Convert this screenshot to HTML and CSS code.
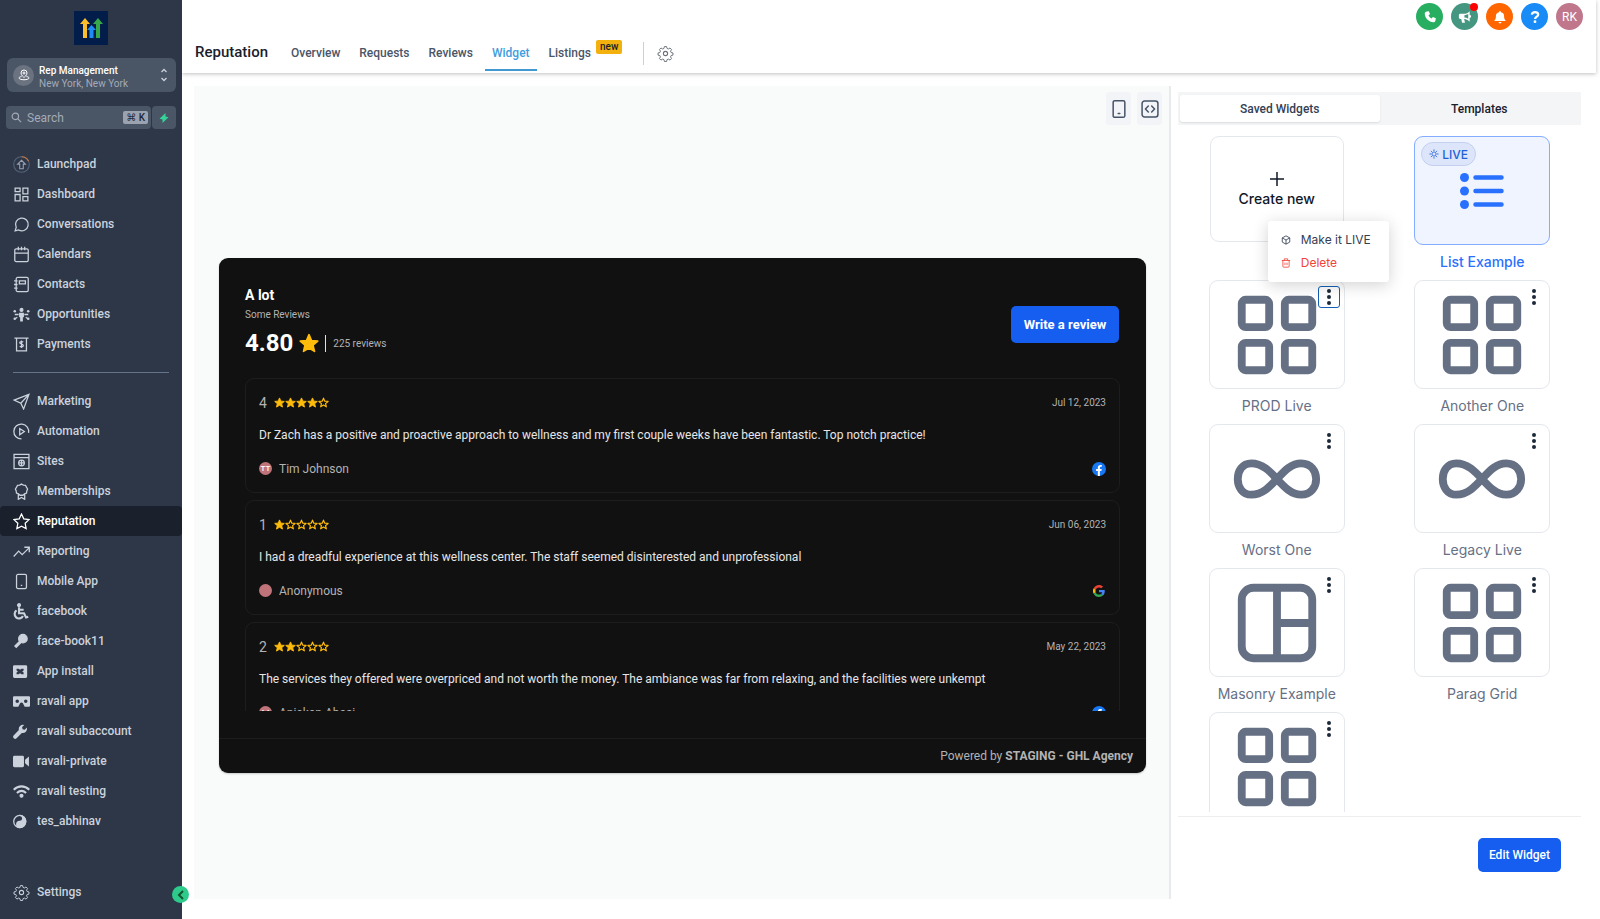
FILE: index.html
```html
<!DOCTYPE html>
<html lang="en">
<head>
    <meta charset="UTF-8">
    <meta name="viewport" content="width=device-width, initial-scale=1.0">
    <title>Reputation - Widget</title>
    <link rel="stylesheet" href="styles.css">
</head>
<body>

    <!-- Shared icons -->
    <svg class="sprite" aria-hidden="true">
        <symbol id="star-full" viewBox="0 0 24 24"><path fill="currentColor" stroke="currentColor" stroke-width="2" stroke-linejoin="round" d="M12 2l3 7 7.500.6-5.700 5 1.800 7.400L12 18l-6.600 4 1.800-7.400-5.700-5L9 9z"/></symbol>
        <symbol id="star-empty" viewBox="0 0 24 24"><path fill="none" stroke="currentColor" stroke-width="2.600" stroke-linejoin="round" d="M12 2.500l2.800 6.600 7.200.6-5.500 4.700 1.700 7L12 17.700l-6.200 3.700 1.700-7L2 9.700l7.200-.6z"/></symbol>
        <symbol id="grid" viewBox="0 0 24 24"><g fill="none" stroke="currentColor" stroke-width="2"><rect x="3" y="3" width="7" height="7" rx="1"/><rect x="14" y="3" width="7" height="7" rx="1"/><rect x="3" y="14" width="7" height="7" rx="1"/><rect x="14" y="14" width="7" height="7" rx="1"/></g></symbol>
        <symbol id="infinity" viewBox="0 0 24 24"><path fill="none" stroke="currentColor" stroke-width="2" d="M18.180 8C23.270 8 23.270 16 18.180 16 13.080 16 11.040 8 5.430 8 .83 8 .83 16 5.430 16 11.040 16 13.080 8 18.180 8z"/></symbol>
        <symbol id="masonry" viewBox="0 0 24 24"><g fill="none" stroke="currentColor" stroke-width="2"><rect x="3" y="3" width="18" height="18" rx="3"/><path d="M12 3v18M12 12h9"/></g></symbol>
        <symbol id="dots" viewBox="0 0 6 18"><g fill="currentColor"><circle cx="3" cy="3" r="2"/><circle cx="3" cy="9" r="2"/><circle cx="3" cy="15" r="2"/></g></symbol>
        <symbol id="gear" viewBox="0 0 24 24"><g fill="none" stroke="currentColor" stroke-linejoin="round"><circle cx="12" cy="12" r="3"/><path d="M10.300 1.800h3.400l.7 2.900 2.100.9 2.600-1.600 2.400 2.400-1.600 2.600.9 2.100 2.900.7v3.400l-2.900.7-.9 2.100 1.600 2.600-2.400 2.400-2.600-1.600-2.100.9-.7 2.900h-3.400l-.7-2.900-2.100-.9-2.600 1.600-2.400-2.400 1.600-2.600-.9-2.100-2.900-.7v-3.400l2.900-.7.9-2.100-1.600-2.600L4.900 4l2.600 1.600 2.100-.9z" transform="translate(1.200 .6) scale(.9 .9)"/></g></symbol>
        <symbol id="phone-outline" viewBox="0 0 24 24"><rect x="5" y="2" width="14" height="20" rx="2"/><path d="M11 17.500h2"/></symbol>
        <symbol id="facebook" viewBox="0 0 24 24"><circle cx="12" cy="12" r="12" fill="#1877f2"/><path fill="#fff" d="M10 24v-8.500H7V12h3V9.500C10 6.400 11.800 5 14.500 5c1.200 0 2.300.2 2.300.2v3h-1.400c-1.400 0-1.900.8-1.900 1.700V12h3.200l-.6 3.500h-2.600V24z"/></symbol>
        <symbol id="google" viewBox="0 0 48 48"><path fill="#ea4335" d="M24 9.500c3.540 0 6.710 1.220 9.210 3.600l6.850-6.850C35.900 2.380 30.470 0 24 0 14.620 0 6.510 5.380 2.560 13.220l7.980 6.190C12.430 13.720 17.740 9.500 24 9.500z"/><path fill="#4285f4" d="M46.980 24.550c0-1.570-.15-3.090-.38-4.550H24v9.020h12.940c-.58 2.960-2.260 5.480-4.780 7.180l7.730 6c4.510-4.180 7.090-10.360 7.090-17.650z"/><path fill="#fbbc05" d="M10.530 28.590a14.500 14.500 0 0 1 0-9.180l-7.980-6.190a24 24 0 0 0 0 21.560z"/><path fill="#34a853" d="M24 48c6.480 0 11.930-2.130 15.890-5.810l-7.730-6c-2.150 1.450-4.920 2.300-8.160 2.300-6.260 0-11.570-4.220-13.470-9.910l-7.980 6.190C6.510 42.620 14.620 48 24 48z"/></symbol>
    </svg>

    <div class="app">
        <aside class="sidebar">
            <svg class="logo" viewBox="0 0 34 34">
                <rect width="34" height="34" fill="#031d4a"/>
                <path fill="#fcbf2c" d="M11 7l5 6h-3v14H9V13H6z"/>
                <path fill="#37a84a" d="M24 7l5 6h-3v14h-4V13h-3z"/>
                <path fill="#1f8cf5" d="M17.500 14l4.500 5h-2.500v8h-4v-8H13z"/>
            </svg>

            <button class="account">
                <span class="account-pin">
                    <svg viewBox="0 0 24 24"><path d="M12 17s-6-4.500-6-9a6 6 0 0 1 12 0c0 4.500-6 9-6 9z"/><circle cx="12" cy="8" r="2"/><path d="M7 15c-3 .6-5 1.600-5 3 0 2 4.500 3.500 10 3.500S22 20 22 18c0-1.400-2-2.400-5-3"/></svg>
                </span>
                <span class="account-text">
                    <span class="account-name">Rep Management</span>
                    <span class="account-place">New York, New York</span>
                </span>
                <svg class="account-arrows" viewBox="0 0 8 14"><path d="M1.500 4L4 1.500 6.500 4M1.500 10L4 12.500 6.500 10"/></svg>
            </button>

            <div class="search-row">
                <label class="search">
                    <svg viewBox="0 0 24 24"><circle cx="9.500" cy="9.500" r="7"/><path d="M15 15l7 7"/></svg>
                    <input type="text" placeholder="Search" aria-label="Search">
                    <kbd>⌘ K</kbd>
                </label>
                <button class="zap" aria-label="Quick actions">
                    <svg viewBox="0 0 12 12"><path fill="#34d399" d="M7.500 1L1.500 6.800l3 .6L4.500 11l6-5.800-3-.6z"/></svg>
                </button>
            </div>

            <nav class="menu">
                <a href="#"><svg class="thin" viewBox="0 0 24 24"><circle cx="12" cy="12" r="11" stroke="#566478"/><path stroke="#c9733f" d="M12 1a11 11 0 0 1 10 6.500"/><path stroke="#98a2b3" d="M12 6l5.500 5.500h-3V18h-5v-6.500h-3z"/></svg>Launchpad</a>
                <a href="#"><svg viewBox="0 0 24 24"><path d="M3 3h7v5H3zM14 3h7v8h-7zM3 12h7v9H3zM14 15h7v6h-7z"/></svg>Dashboard</a>
                <a href="#"><svg viewBox="0 0 24 24"><path d="M3 21l1.500-5A9 9 0 1 1 8 19.700z"/></svg>Conversations</a>
                <a href="#"><svg viewBox="0 0 24 24"><rect x="2.500" y="4" width="19" height="18" rx="2"/><path d="M2.500 10h19M7.500 1v5M12 1v5M16.500 1v5"/></svg>Calendars</a>
                <a href="#"><svg viewBox="0 0 24 24"><rect x="4.500" y="2" width="17" height="20" rx="2"/><path d="M9 7h8.500v4H9zM1.500 7h5M1.500 12h5M1.500 17h5"/></svg>Contacts</a>
                <a href="#"><svg viewBox="0 0 24 24"><circle cx="12" cy="5.500" r="2" fill="currentColor"/><path fill="currentColor" d="M9.500 10.500h5v4.500h-1.500v6h-2v-6h-1.500z"/><path d="M8 12H2.500M16 12h5.500M6 16l-3 2M18 16l3 2"/><g fill="currentColor" stroke="none"><circle cx="2.500" cy="7.500" r="1.800"/><circle cx="21.500" cy="7.500" r="1.800"/><circle cx="2.500" cy="18" r="1.800"/><circle cx="21.500" cy="18" r="1.800"/></g></svg>Opportunities</a>
                <a href="#"><svg viewBox="0 0 24 24"><path d="M2 3h20M5 3v18h14V3"/><path d="M14.500 8.500c-1-1-5-1-5 1s5 1.500 5 4-4 2-5 1M12 6.500v10.500"/></svg>Payments</a>
            </nav>
            <hr>
            <nav class="menu">
                <a href="#"><svg viewBox="0 0 24 24"><path d="M1.500 10L22.500 2 15 22.500l-4-8zM22.500 2L11 14.500"/></svg>Marketing</a>
                <a href="#"><svg viewBox="0 0 24 24"><path d="M12 22.500A10.500 10.500 0 1 1 22 14"/><path d="M9.500 8v8.500L16 12z"/></svg>Automation</a>
                <a href="#"><svg viewBox="0 0 24 24"><path d="M1.500 2h21v20h-21zM1.500 6.500h21"/><circle cx="12" cy="14" r="4"/><path d="M8 14h8M12 10v8"/></svg>Sites</a>
                <a href="#"><svg viewBox="0 0 24 24"><path d="M12 1.500l2.700 1.400 3 .3 1.200 2.700 1.700 2.600-1.100 2.800-.4 3-2.800 1.100L14 17.300h-4l-2.300-1.900L4.900 14.300l-.4-3L3.400 8.500l1.700-2.600 1.200-2.700 3-.3zM7.500 16v7l4.500-2.500 4.500 2.500v-7"/></svg>Memberships</a>
                <a href="#" class="active"><svg viewBox="0 0 24 24"><path d="M12 1.500l3.200 6.800 7.300 1-5.300 5.200 1.300 7.500L12 18.500 5.500 22l1.300-7.500L1.500 9.300l7.300-1z"/></svg>Reputation</a>
                <a href="#"><svg viewBox="0 0 24 24"><path d="M1 19l7-7.500 5 5L23 6.500M16 6h7v7"/></svg>Reporting</a>
                <a href="#"><svg viewBox="0 0 24 24"><use href="#phone-outline"/></svg>Mobile App</a>
                <a href="#"><svg viewBox="0 0 24 24"><circle cx="8.500" cy="3" r="2" fill="currentColor"/><path stroke-width="3" d="M8.500 6v8.500h7l3 6 3-1M9 9.500h6"/><path stroke-width="3" d="M5 10.500a6.200 6.200 0 1 0 9 8"/></svg>facebook</a>
                <a href="#"><svg viewBox="0 0 24 24"><circle cx="14" cy="8" r="6" fill="currentColor"/><path stroke-width="4.500" d="M11.500 11.500L3 20"/></svg>face-book11</a>
                <a href="#"><svg viewBox="0 0 24 24"><path fill="currentColor" fill-rule="evenodd" stroke="none" d="M2 3h16a2 2 0 0 1 2 2v14a2 2 0 0 1-2 2H2a2 2 0 0 1-2-2V5a2 2 0 0 1 2-2zm3 5v2.500L7 12l-2 1.500V16h3l2-1.500L12 16h3v-2.500L13 12l2-1.500V8h-3l-2 1.500L8 8z"/></svg>App install</a>
                <a href="#"><svg viewBox="0 0 24 24"><path fill="currentColor" fill-rule="evenodd" stroke="none" d="M1.500 4.500h21A1.500 1.500 0 0 1 24 6v12a1.500 1.500 0 0 1-1.500 1.500h-6L14 14.500c-.8-1.600-3.200-1.600-4 0l-2.500 5h-6A1.500 1.500 0 0 1 0 18V6a1.500 1.500 0 0 1 1.500-1.500zM6 9a2.500 2.500 0 1 0 0 5 2.500 2.500 0 0 0 0-5zm12 0a2.500 2.500 0 1 0 0 5 2.500 2.500 0 0 0 0-5z"/></svg>ravali app</a>
                <a href="#"><svg viewBox="0 0 24 24"><path fill="currentColor" stroke="none" d="M19.500 6.500l-3 3-3-.8-.7-2.900 3-3A6 6 0 0 0 8.300 10L.8 17.500a3 3 0 0 0 4.200 4.200L12.500 14a6 6 0 0 0 7-7.500z"/></svg>ravali subaccount</a>
                <a href="#"><svg viewBox="0 0 24 24"><rect x="0" y="4" width="15.500" height="16" rx="2" fill="currentColor" stroke="none"/><path fill="currentColor" stroke="none" d="M17 9.500l5.500-4.500v14L17 14.500z"/></svg>ravali-private</a>
                <a href="#"><svg viewBox="0 0 24 24"><path stroke-width="3" d="M1 9.500c6.500-6.200 15.500-6.200 22 0M5.500 14c4-3.600 9-3.600 13 0"/><circle cx="12" cy="18" r="2" fill="currentColor"/></svg>ravali testing</a>
                <a href="#"><svg viewBox="0 0 24 24"><circle cx="9.500" cy="12" r="8.500"/><path fill="currentColor" d="M9.500 3.500a4.200 4.200 0 0 1 0 8.500 4.200 4.200 0 0 0 0 8.500 8.500 8.500 0 0 0 0-17z"/><circle cx="9.500" cy="7.700" r="1" fill="#2d3748" stroke="#2d3748"/><circle cx="9.500" cy="16.300" r="1" fill="currentColor"/></svg>tes_abhinav</a>
            </nav>
            <nav class="menu menu-bottom">
                <a href="#"><svg viewBox="0 0 24 24" class="thin"><use href="#gear"/></svg>Settings</a>
            </nav>
            <button class="collapse" aria-label="Collapse sidebar">
                <svg viewBox="0 0 16 16"><path d="M10 4L6 8l4 4"/></svg>
            </button>
        </aside>

        <main class="main">
            <header class="topbar">
                <div class="top-icons">
                    <button class="round green" aria-label="Call"><svg viewBox="0 0 24 24"><path fill="#fff" d="M6.500 2.500l3.500-.5 2 5-2.500 2.300c1.100 2.200 3 4.100 5.200 5.200L17 12l5 2-.5 3.500c-.3 2-1.700 3.500-3.700 3.500C10 21 3 14 3 6.200c0-2 1.500-3.400 3.500-3.700z"/></svg></button>
                    <button class="round teal" aria-label="Announcements"><svg viewBox="0 0 24 24"><path fill="#fff" fill-rule="evenodd" d="M20 2v6.500a2.500 2.500 0 0 1 0 5V20c-3-3-6-4.300-9.500-4.500L12 22H7l-1.500-6.500H4c-1.500 0-2.500-1-2.500-2.500V9c0-1.500 1-2.500 2.500-2.500h6c4 0 7-1.500 10-4.500zm-2.500 5a17 17 0 0 1-6.500 2v4c2.300.2 4.500.8 6.500 2z"/></svg><span class="dot"></span></button>
                    <button class="round orange" aria-label="Notifications"><svg viewBox="0 0 24 24"><path fill="#fff" d="M12 1.500a1.500 1.500 0 0 1 1.500 1.500v.7A6.800 6.800 0 0 1 19 10.500c0 4 1 5.500 2.500 7.500v1h-19v-1C4 16 5 14.500 5 10.500a6.800 6.800 0 0 1 5.500-6.800V3A1.500 1.500 0 0 1 12 1.500zM9.500 20.500h5a2.500 2.500 0 0 1-5 0z"/></svg></button>
                    <button class="round blue" aria-label="Help"><svg viewBox="0 0 24 24"><path fill="none" stroke="#fff" stroke-width="3.800" d="M6.500 8c.4-3 2.500-4.500 5.500-4.500s5.500 1.500 5.500 4.500c0 3.500-5.300 3.500-5.300 7.500"/><circle cx="12" cy="20" r="2.400" fill="#fff"/></svg></button>
                    <button class="round user">RK</button>
                </div>
                <nav class="tabs">
                    <h1>Reputation</h1>
                    <a href="#">Overview</a>
                    <a href="#">Requests</a>
                    <a href="#">Reviews</a>
                    <a href="#" class="active">Widget</a>
                    <a href="#">Listings<span class="new">new</span></a>
                    <button class="tab-settings" aria-label="Settings"><svg viewBox="0 0 24 24"><use href="#gear"/></svg></button>
                </nav>
            </header>

            <div class="content">
                <section class="preview">
                    <div class="tools">
                        <button aria-label="Mobile view"><svg viewBox="0 0 24 24"><use href="#phone-outline"/></svg></button>
                        <button aria-label="Embed code"><svg viewBox="0 0 24 24"><rect x="2.500" y="2.500" width="19" height="19" rx="3"/><path d="M10 8.500L6.500 12l3.500 3.500M14 8.500l3.500 3.500-3.500 3.500"/></svg></button>
                    </div>

                    <div class="stage">
                        <div class="widget">
                            <div class="widget-head">
                                <div>
                                    <h2>A lot</h2>
                                    <p class="subtitle">Some Reviews</p>
                                    <div class="score">
                                        <strong>4.80</strong>
                                        <svg><use href="#star-full"/></svg>
                                        <span class="count">225 reviews</span>
                                    </div>
                                </div>
                                <button class="write">Write a review</button>
                            </div>

                            <div class="reviews">
                                <article class="review">
                                    <div class="review-row">
                                        <span class="rate">4</span>
                                        <span class="stars"><svg><use href="#star-full"/></svg><svg><use href="#star-full"/></svg><svg><use href="#star-full"/></svg><svg><use href="#star-full"/></svg><svg><use href="#star-empty"/></svg></span>
                                        <time>Jul 12, 2023</time>
                                    </div>
                                    <p>Dr Zach has a positive and proactive approach to wellness and my first couple weeks have been fantastic. Top notch practice!</p>
                                    <div class="review-row">
                                        <span class="avatar">TT</span>
                                        <span class="author">Tim Johnson</span>
                                        <svg class="source"><use href="#facebook"/></svg>
                                    </div>
                                </article>
                                <article class="review">
                                    <div class="review-row">
                                        <span class="rate">1</span>
                                        <span class="stars"><svg><use href="#star-full"/></svg><svg><use href="#star-empty"/></svg><svg><use href="#star-empty"/></svg><svg><use href="#star-empty"/></svg><svg><use href="#star-empty"/></svg></span>
                                        <time>Jun 06, 2023</time>
                                    </div>
                                    <p>I had a dreadful experience at this wellness center. The staff seemed disinterested and unprofessional</p>
                                    <div class="review-row">
                                        <span class="avatar"></span>
                                        <span class="author">Anonymous</span>
                                        <svg class="source" viewBox="-4 -4 56 56"><use href="#google" width="48" height="48"/></svg>
                                    </div>
                                </article>
                                <article class="review">
                                    <div class="review-row">
                                        <span class="rate">2</span>
                                        <span class="stars"><svg><use href="#star-full"/></svg><svg><use href="#star-full"/></svg><svg><use href="#star-empty"/></svg><svg><use href="#star-empty"/></svg><svg><use href="#star-empty"/></svg></span>
                                        <time>May 22, 2023</time>
                                    </div>
                                    <p>The services they offered were overpriced and not worth the money. The ambiance was far from relaxing, and the facilities were unkempt</p>
                                    <div class="review-row">
                                        <span class="avatar">AA</span>
                                        <span class="author">Aniekan Abasi</span>
                                        <svg class="source"><use href="#facebook"/></svg>
                                    </div>
                                </article>
                            </div>

                            <footer class="powered">Powered by <b>STAGING - GHL Agency</b></footer>
                        </div>
                    </div>
                </section>

                <section class="panel">
                    <div class="switch">
                        <button class="active">Saved Widgets</button>
                        <button>Templates</button>
                    </div>

                    <div class="saved">
                        <div class="item">
                            <button class="card create">
                                <svg viewBox="0 0 14 14"><path d="M7 0v14M0 7h14"/></svg>
                                Create new
                            </button>
                        </div>
                        <div class="item live">
                            <div class="card">
                                <span class="badge"><svg viewBox="0 0 24 24"><circle cx="12" cy="12" r="5"/><path d="M12 1v4M12 19v4M1 12h4M19 12h4M4.500 4.500l2.500 2.500M17 17l2.500 2.500M4.500 19.500L7 17M17 7l2.500-2.500"/></svg>LIVE</span>
                                <svg class="list-icon" viewBox="0 0 44 36"><g fill="currentColor"><circle cx="4.500" cy="4.500" r="4.500"/><circle cx="4.500" cy="18" r="4.500"/><circle cx="4.500" cy="31.500" r="4.500"/></g><path stroke="currentColor" stroke-width="4.500" stroke-linecap="round" d="M15.500 4.500h26M15.500 18h26M15.500 31.500h26"/></svg>
                            </div>
                            <span class="name">List Example</span>
                        </div>
                        <div class="item">
                            <div class="card">
                                <svg class="type"><use href="#grid"/></svg>
                                <button class="more open" aria-label="More"><svg><use href="#dots"/></svg></button>
                                <div class="popup">
                                    <button><svg viewBox="0 0 24 24"><path d="M12 2l9 5v10l-9 5-9-5V7zM3 7l9 5 9-5M12 12v10"/></svg>Make it LIVE</button>
                                    <button class="danger"><svg viewBox="0 0 24 24"><path d="M2 6h20M8 6V2h8v4M4.500 6v14a2 2 0 0 0 2 2h11a2 2 0 0 0 2-2V6M9.500 11v6M14.500 11v6"/></svg>Delete</button>
                                </div>
                            </div>
                            <span class="name">PROD Live</span>
                        </div>
                        <div class="item">
                            <div class="card">
                                <svg class="type"><use href="#grid"/></svg>
                                <button class="more" aria-label="More"><svg><use href="#dots"/></svg></button>
                            </div>
                            <span class="name">Another One</span>
                        </div>
                        <div class="item">
                            <div class="card">
                                <svg class="type"><use href="#infinity"/></svg>
                                <button class="more" aria-label="More"><svg><use href="#dots"/></svg></button>
                            </div>
                            <span class="name">Worst One</span>
                        </div>
                        <div class="item">
                            <div class="card">
                                <svg class="type"><use href="#infinity"/></svg>
                                <button class="more" aria-label="More"><svg><use href="#dots"/></svg></button>
                            </div>
                            <span class="name">Legacy Live</span>
                        </div>
                        <div class="item">
                            <div class="card">
                                <svg class="type"><use href="#masonry"/></svg>
                                <button class="more" aria-label="More"><svg><use href="#dots"/></svg></button>
                            </div>
                            <span class="name">Masonry Example</span>
                        </div>
                        <div class="item">
                            <div class="card">
                                <svg class="type"><use href="#grid"/></svg>
                                <button class="more" aria-label="More"><svg><use href="#dots"/></svg></button>
                            </div>
                            <span class="name">Parag Grid</span>
                        </div>
                        <div class="item">
                            <div class="card">
                                <svg class="type"><use href="#grid"/></svg>
                                <button class="more" aria-label="More"><svg><use href="#dots"/></svg></button>
                            </div>
                        </div>
                    </div>

                    <div class="panel-footer">
                        <button class="edit">Edit Widget</button>
                    </div>
                </section>
            </div>
        </main>
    </div>

</body>
</html>
```

FILE: styles.css
```css
* {
    box-sizing: border-box;
}
body {
    margin: 0;
    font-family: Roboto, "Liberation Sans", sans-serif;
    font-size: 12px;
    color: #1a202c;
    background-color: #fff;
}
h1, h2, p {
    margin: 0;
}
button {
    border: 0;
    padding: 0;
    background: none;
    font: inherit;
    color: inherit;
    cursor: pointer;
}
a {
    color: inherit;
    text-decoration: none;
}
svg {
    display: block;
    flex: none;
}
.sprite {
    position: absolute;
    width: 0;
    height: 0;
}
.app {
    display: flex;
    height: 100vh;
}

/* Sidebar */
.sidebar {
    position: relative;
    display: flex;
    flex-direction: column;
    flex: none;
    width: 182px;
    padding: 11px 0 12px;
    background-color: #2d3748;
    color: #cbd2dc;
}
.logo {
    width: 34px;
    height: 34px;
    margin: 0 auto 13px;
}
.account {
    display: flex;
    align-items: center;
    gap: 5px;
    height: 34px;
    margin: 0 6px 14px 7px;
    padding: 0 8px 0 6px;
    border-radius: 6px;
    background-color: #4a5565;
    text-align: left;
}
.account-pin {
    display: grid;
    place-items: center;
    width: 21px;
    height: 21px;
    border-radius: 50%;
    background-color: #6b7380;
}
.account-pin svg {
    width: 12px;
    height: 12px;
    fill: none;
    stroke: #fff;
    stroke-width: 2;
}
.account-text {
    flex: 1;
    display: flex;
    flex-direction: column;
    padding-top: 4px;
    font-size: 10px;
    line-height: 13px;
}
.account-name {
    color: #fff;
    font-weight: 500;
}
.account-place {
    color: #a3abb8;
}
.account-arrows {
    width: 8px;
    height: 14px;
    fill: none;
    stroke: #cbd2dc;
    stroke-width: 1.3;
}
.search-row {
    display: flex;
    gap: 1px;
    margin: 0 6px 20px;
}
.search {
    display: flex;
    align-items: center;
    gap: 5px;
    flex: 1;
    min-width: 0;
    height: 23px;
    padding: 0 3px 0 5px;
    border-radius: 4px;
    background-color: #4a5565;
}
.search svg {
    width: 11px;
    height: 11px;
    fill: none;
    stroke: #a3abb8;
    stroke-width: 2.6;
}
.search input {
    flex: 1;
    min-width: 0;
    padding: 0;
    border: 0;
    outline: 0;
    background: none;
    font: inherit;
    color: #fff;
}
.search input::placeholder {
    color: #a3abb8;
}
.search kbd {
    padding: 0 3px;
    border-radius: 2px;
    background-color: #9ba3b1;
    color: #1f2937;
    font: 500 10px/13px Roboto, "DejaVu Sans", sans-serif;
}
.zap {
    display: grid;
    place-items: center;
    width: 24px;
    border-radius: 4px;
    background-color: #4a5565;
}
.zap svg {
    width: 12px;
    height: 12px;
}
.menu a {
    display: flex;
    align-items: center;
    gap: 7px;
    height: 30px;
    padding-left: 13px;
    font-weight: 500;
}
.menu svg {
    width: 17px;
    height: 17px;
    fill: none;
    stroke: currentColor;
    stroke-width: 1.8;
}
.menu .thin {
    stroke-width: 1.5;
}
.menu .active {
    border-radius: 4px;
    background-color: #1a202c;
    color: #fff;
}
.sidebar hr {
    width: 156px;
    margin: 13px auto;
    border: 0;
    border-top: 1px solid #64748b;
}
.menu-bottom {
    margin-top: auto;
}
.collapse {
    position: absolute;
    right: -7px;
    bottom: 16px;
    display: grid;
    place-items: center;
    width: 17px;
    height: 17px;
    border-radius: 50%;
    background-color: #2dca8c;
}
.collapse svg {
    width: 16px;
    height: 16px;
    fill: none;
    stroke: #14532d;
    stroke-width: 2;
}

/* Top bar */
.main {
    flex: 1;
    min-width: 0;
    display: flex;
    flex-direction: column;
}
.topbar {
    margin-right: 4px;
    height: 73px;
    flex: none;
    background-color: #fff;
    box-shadow: 0 1px 4px rgba(0, 0, 0, 0.25);
}
.top-icons {
    display: flex;
    justify-content: flex-end;
    gap: 8px;
    height: 33px;
    padding: 3px 13px 0 0;
}
.round {
    position: relative;
    display: grid;
    place-items: center;
    width: 27px;
    height: 27px;
    border-radius: 50%;
    color: #fff;
}
.round svg {
    width: 14px;
    height: 14px;
}
.green { background-color: #27ae60; }
.teal { background-color: #459680; }
.orange { background-color: #ff6600; }
.blue { background-color: #188bf6; }
.user { background-color: #c0778c; }
.dot {
    position: absolute;
    top: 0;
    right: 0;
    width: 8px;
    height: 8px;
    border-radius: 50%;
    background-color: #f00;
}
.tabs {
    display: flex;
    align-items: center;
    gap: 5px;
    height: 38px;
    padding-left: 13px;
    color: #4a5568;
    font-weight: 500;
}
.tabs h1 {
    margin-right: 11px;
    color: #1a202c;
    font-size: 15px;
    font-weight: 500;
}
.tabs a {
    display: flex;
    align-items: center;
    height: 38px;
    padding: 3px 7px 0;
    border-bottom: 2px solid transparent;
}
.tabs .active {
    border-color: #4299d1;
    color: #3f9de0;
}
.new {
    margin: 0 0 12px 5px;
    padding: 0 4px;
    border-radius: 2px;
    background-color: #f2b10c;
    color: #1a202c;
    font-size: 10px;
    line-height: 14px;
}
.tab-settings {
    height: 23px;
    margin: 2px 0 0 9px;
    padding-left: 13px;
    border-left: 1px solid #cbd0d6;
    color: #697077;
}
.tab-settings svg {
    width: 17px;
    height: 17px;
    stroke-width: 1.5;
}

/* Widget preview */
.content {
    flex: 1;
    min-height: 0;
    display: flex;
    padding: 13px 13px 20px 12px;
}
.preview {
    flex: 1;
    min-width: 0;
    display: flex;
    flex-direction: column;
    padding-top: 6px;
    border-right: 2px solid #e8eaed;
    background-color: #f9fbfb;
}
.tools {
    display: flex;
    justify-content: flex-end;
    gap: 6px;
    padding-right: 7px;
}
.tools button {
    display: grid;
    place-items: center;
    width: 25px;
    height: 33px;
    border-radius: 3px;
    background-color: #f2f4f7;
}
.tools svg {
    width: 20px;
    height: 20px;
    fill: none;
    stroke: #475467;
    stroke-width: 1.8;
    stroke-linecap: round;
    stroke-linejoin: round;
}
.stage {
    flex: 1;
    display: flex;
    align-items: center;
    padding: 7px 23px 0 25px;
}
.widget {
    flex: 1;
    min-width: 0;
    border-radius: 9px;
    background-color: #111;
    color: #b3b3b3;
    box-shadow: 0 1px 2px rgba(0, 0, 0, 0.2);
}
.widget-head {
    display: flex;
    justify-content: space-between;
    align-items: center;
    padding: 27px 27px 0 26px;
}
.widget h2 {
    color: #fff;
    font-size: 14px;
    line-height: 20px;
}
.subtitle {
    font-size: 10px;
    line-height: 20px;
}
.score {
    display: flex;
    align-items: center;
    gap: 6px;
    height: 36px;
    margin-bottom: 17px;
}
.score strong {
    color: #fff;
    font-size: 24px;
}
.score svg {
    width: 20px;
    height: 20px;
    color: #ffbc0b;
}
.count {
    padding-left: 7px;
    border-left: 1px solid #e0e0e0;
    font-size: 10px;
    line-height: 17px;
}
.write {
    width: 108px;
    height: 37px;
    margin-bottom: 14px;
    border-radius: 5px;
    background-color: #155eef;
    color: #fff;
    font-size: 13px;
    font-weight: 700;
}
.reviews {
    display: flex;
    flex-direction: column;
    gap: 7px;
    height: 333px;
    margin: 0 26px 27px;
    overflow: hidden;
}
.review {
    flex: none;
    padding: 15px 13px;
    border: 1px solid #1d1d1d;
    border-radius: 9px;
}
.review-row {
    display: flex;
    align-items: center;
    gap: 7px;
    height: 17px;
}
.review p {
    margin: 16px 0;
    color: #e6e6e6;
    line-height: 17px;
}
.rate {
    font-size: 14px;
}
.stars {
    display: flex;
    color: #ffbc0b;
}
.stars svg {
    width: 11px;
    height: 11px;
}
.review time {
    margin-left: auto;
    font-size: 10px;
}
.avatar {
    display: grid;
    place-items: center;
    width: 13px;
    height: 13px;
    border-radius: 50%;
    background-color: #c0747a;
    color: #fff;
    font-size: 8px;
    font-weight: 500;
}
.source {
    width: 14px;
    height: 14px;
    margin-left: auto;
}
.powered {
    padding-right: 13px;
    border-top: 1px solid #1d1d1d;
    line-height: 34px;
    text-align: right;
}

/* Saved widgets panel */
.panel {
    flex: none;
    width: 416px;
    display: flex;
    flex-direction: column;
    padding: 6px 6px 0 7px;
}
.switch {
    display: grid;
    grid-template-columns: 1fr 1fr;
    padding: 3px 2px;
    background-color: #f4f5f7;
}
.switch button {
    height: 27px;
    border-radius: 3px;
    font-weight: 500;
}
.switch .active {
    background-color: #fff;
    color: #344054;
    box-shadow: 0 1px 2px rgba(0, 0, 0, 0.1);
}
.saved {
    flex: 1;
    min-height: 0;
    display: grid;
    grid-template-columns: 1fr 1fr;
    grid-auto-rows: 144px;
    margin: 0 -4px;
    padding-top: 11px;
    overflow: hidden;
    font-family: Inter, Roboto, sans-serif;
    font-size: 14px;
    color: #667085;
}
.item {
    display: flex;
    flex-direction: column;
    align-items: center;
    gap: 7px;
}
.name {
    line-height: 20px;
}
.card {
    position: relative;
    display: grid;
    place-items: center;
    width: 136px;
    height: 109px;
    border: 1px solid #e4e7ec;
    border-radius: 9px;
    background-color: #fff;
}
.create {
    align-content: center;
    gap: 4px;
    width: 134px;
    height: 106px;
    color: #101828;
    font-weight: 500;
}
.create svg {
    width: 14px;
    height: 14px;
    stroke: currentColor;
    stroke-width: 1.5;
}
.live {
    color: #2970ff;
    font-weight: 500;
}
.live .card {
    border-color: #84adff;
    background-color: #eff4ff;
}
.list-icon {
    width: 44px;
    height: 36px;
}
.badge {
    position: absolute;
    top: 5px;
    left: 6px;
    display: flex;
    align-items: center;
    gap: 3px;
    height: 24px;
    padding: 0 7px;
    border: 1px solid #c5d0f0;
    border-radius: 12px;
    background-color: #dde5fa;
    color: #2160d8;
    font-size: 12px;
}
.badge svg {
    width: 10px;
    height: 10px;
    fill: none;
    stroke: currentColor;
    stroke-width: 2;
}
.type {
    width: 94px;
    height: 94px;
}
.more {
    position: absolute;
    top: 5px;
    right: 4px;
    display: grid;
    place-items: center;
    width: 22px;
    height: 22px;
    border-radius: 3px;
    color: #1d2939;
}
.more svg {
    width: 6px;
    height: 18px;
}
.open {
    border: 1px solid #155eb5;
    background-color: #fff;
}
.popup {
    position: absolute;
    right: -45px;
    bottom: 106px;
    z-index: 1;
    width: 121px;
    padding: 7px 0 8px;
    border-radius: 3px;
    background-color: #fff;
    box-shadow: 0 3px 16px rgba(0, 0, 0, 0.18);
}
.popup button {
    display: flex;
    align-items: center;
    gap: 10px;
    width: 100%;
    height: 23px;
    padding-left: 13px;
    color: #344054;
    font-size: 12px;
}
.popup svg {
    width: 10px;
    height: 10px;
    fill: none;
    stroke: currentColor;
    stroke-width: 2;
}
.popup .danger {
    color: #f04438;
}
.panel-footer {
    display: flex;
    justify-content: flex-end;
    height: 83px;
    margin-top: 4px;
    padding: 21px 20px 0;
    border-top: 1px solid #eceef0;
}
.edit {
    width: 83px;
    height: 34px;
    border-radius: 5px;
    background-color: #155eef;
    color: #fff;
    font-weight: 500;
}
```
